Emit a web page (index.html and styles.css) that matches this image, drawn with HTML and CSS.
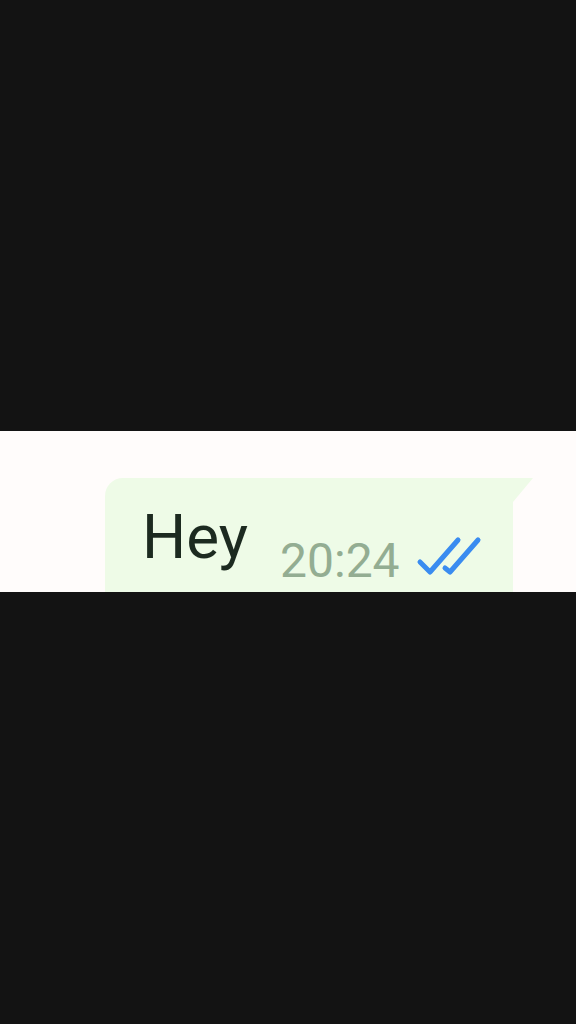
FILE: index.html
```html
<!DOCTYPE html>
<html>
<head>
<meta charset="utf-8">
<link rel="stylesheet" href="styles.css">
</head>
<body>
<div class="screen">
  <div class="band">
    <div class="bubble">
      <div class="msg">Hey</div>
      <div class="time">20:24</div>
      <svg class="ticks" width="66" height="42" viewBox="0 0 66 42">
        <path d="M4 26 L14 36 L42 4" fill="none" stroke="#3a8cf0" stroke-width="5" stroke-linecap="round" stroke-linejoin="round"/>
        <path d="M29 32 L34 36 L62 4" fill="none" stroke="#3a8cf0" stroke-width="5" stroke-linecap="round" stroke-linejoin="round"/>
      </svg>
    </div>
  </div>
</div>
</body>
</html>
```
FILE: styles.css
```css
html, body {
  margin: 0;
  padding: 0;
  background: #131313;
}
.screen {
  width: 576px;
  height: 1024px;
  padding-top: 431px;
  box-sizing: border-box;
  background: #131313;
}
.band {
  height: 161px;
  background: #fffcfb;
  overflow: hidden;
  padding-top: 47px;
  box-sizing: border-box;
}
.bubble {
  position: relative;
  margin-left: 105px;
  width: 408px;
  height: 140px;
  background: #eefbe7;
  border-radius: 18px 0 18px 18px;
  display: flex;
  align-items: flex-start;
  padding: 28px 0 0 37px;
  box-sizing: border-box;
  font-family: Roboto, "Noto Sans", sans-serif;
}
.bubble::after {
  content: "";
  position: absolute;
  top: 0;
  right: -20px;
  width: 20px;
  height: 24px;
  background: #eefbe7;
  clip-path: polygon(0 0, 100% 0, 0 100%);
}
.msg {
  font-size: 62px;
  line-height: 62px;
  color: #1c2a20;
}
.time {
  font-size: 48px;
  line-height: 48px;
  color: #93ad92;
  margin-top: 31px;
  margin-left: 32px;
}
.ticks {
  margin-top: 30px;
  margin-left: 16px;
}
```
